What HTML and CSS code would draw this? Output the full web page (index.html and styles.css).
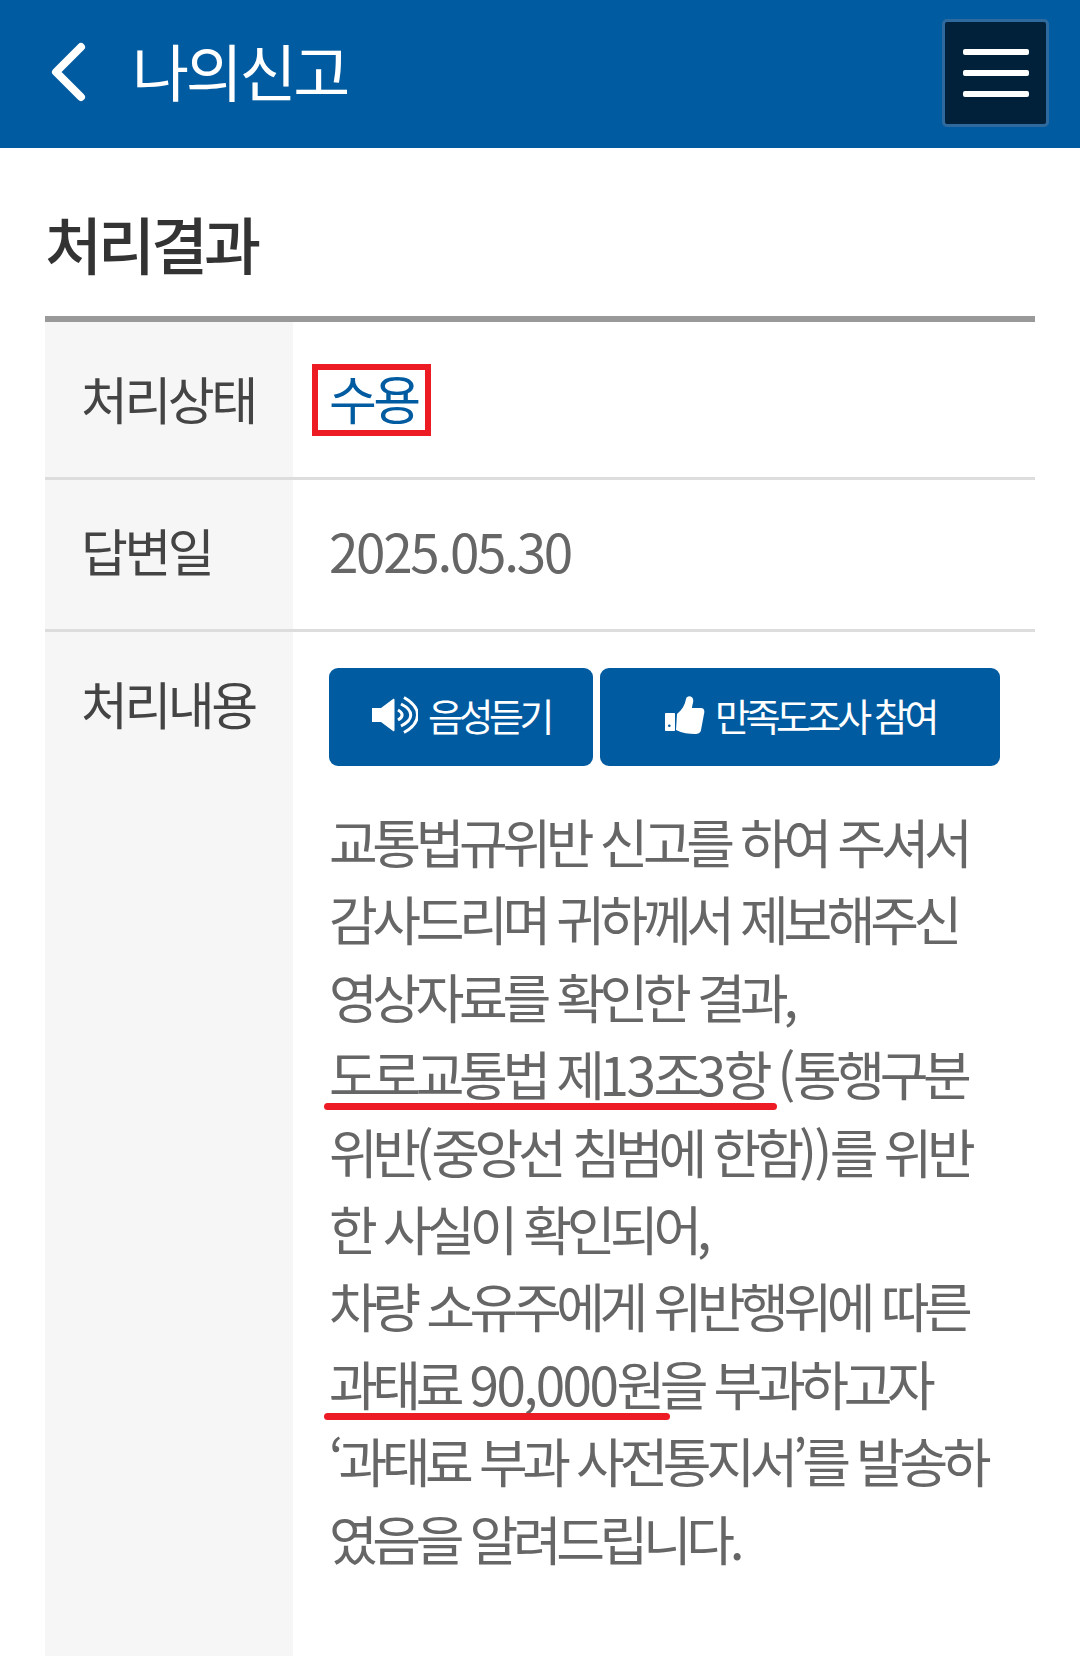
FILE: index.html
```html
<!DOCTYPE html>
<html lang="ko">
<head>
  <meta charset="UTF-8" />
  <meta name="viewport" content="width=device-width, initial-scale=1.0"/>
  <title>나의신고</title>
  <link rel="stylesheet" href="styles.css">
</head>
<body>

  <header class="topbar">
    <svg class="back" viewBox="0 0 40 60" aria-hidden="true">
      <polyline points="33,5 8,30 33,55" />
    </svg>
    <div class="topbar-title">나의신고</div>
    <button class="menu" aria-label="메뉴"><span></span><span></span><span></span></button>
  </header>

  <main class="content">
    <h2>처리결과</h2>

    <div class="result">
      <div class="row row-status">
        <div class="label">처리상태</div>
        <div class="value"><span class="status">수용</span></div>
      </div>

      <div class="row row-date">
        <div class="label">답변일</div>
        <div class="value"><span class="date">2025.05.30</span></div>
      </div>

      <div class="row row-body">
        <div class="label">처리내용</div>
        <div class="value">
          <div class="actions">
            <a class="btn btn-voice">
              <svg class="ico ico-voice" viewBox="0 0 46 38" aria-hidden="true">
                <path class="fill" d="M0 12h9L21 3c.8-.6 1.500-.2 1.500.8v30.400c0 1-.7 1.400-1.500.8L9 26H0z" />
                <path class="line" d="M26 14c5.500 3 5.500 7 0 10M29 8c13 6.500 13 15.500 0 22M32 1.500c18 10 18 25 0 35" />
              </svg>
              음성듣기
            </a>
            <a class="btn btn-survey">
              <svg class="ico ico-survey" viewBox="0 0 40 38" aria-hidden="true">
                <path class="fill" d="M1 17h8c.6 0 1 .4 1 1v16c0 .6-.4 1-1 1H1c-.6 0-1-.4-1-1V18c0-.6.4-1 1-1z" />
                <circle class="hole" cx="4.300" cy="29.700" r="1.300" />
                <path class="fill" d="M12 18C17 14 20 9 21 3c.5-3.500 6-4 7 0 1 3-1 6-1 9h9c3 0 4 3 3 6l-3 16c-.5 3-3 4-6 4-6 0-13-1-19-4z" />
              </svg>
              만족도조사 참여
            </a>
          </div>

          <p class="answer">교통법규위반 신고를 하여 주셔서<br>
          감사드리며 귀하께서 제보해주신<br>
          영상자료를 확인한 결과,<br>
          <span class="mark">도로교통법 제<span class="num">13</span>조<span class="num">3</span>항</span> <span class="num">(</span>통행구분<br>
          위반<span class="num">(</span>중앙선 침범에 한함<span class="num">))</span>를 위반<br>
          한 사실이 확인되어,<br>
          차량 소유주에게 위반행위에 따른<br>
          <span class="mark">과태료 <span class="num">90,000</span>원</span>을 부과하고자<br>
          ‘과태료 부과 사전통지서’를 발송하<br>
          였음을 알려드립니다.</p>
        </div>
      </div>
    </div>
  </main>

</body>
</html>
```

FILE: styles.css
```css
html, body {
  height: 100%;
}

body {
  font-family: "Noto Sans CJK KR", "Noto Sans", sans-serif;
  background-color: #fff;
  color: #666;
  margin: 0;
  overflow: hidden;
  display: flex;
  flex-direction: column;
}

.topbar {
  height: 148px;
  background-color: #005ba1;
  display: flex;
  align-items: center;
  padding: 0 31px 0 48px;
  flex-shrink: 0;
}

.back {
  width: 40px;
  height: 60px;
  fill: none;
  stroke: #fff;
  stroke-width: 8;
  stroke-linecap: round;
  stroke-linejoin: round;
  margin-right: 44px;
  margin-top: -4px;
}

.topbar-title {
  font-size: 62px;
  color: #fff;
  letter-spacing: -3.3px;
  margin-top: -9px;
}

.menu {
  margin-left: auto;
  width: 107px;
  height: 108px;
  background-color: #012039;
  border: 3px solid #2f6a9e;
  border-radius: 5px;
  padding: 27px 17px 0 18px;
  display: flex;
  flex-direction: column;
  gap: 15px;
  box-sizing: border-box;
  margin-top: -2px;
}

.menu span {
  display: block;
  width: 100%;
  height: 6px;
  background-color: #fff;
  border-radius: 2px;
}

.content {
  flex: 1;
  padding: 0 45px;
  display: flex;
  flex-direction: column;
}

h2 {
  font-size: 62px;
  font-weight: 500;
  color: #333;
  letter-spacing: -4px;
  line-height: 84px;
  margin: 53px 0 31px;
}

.result {
  flex: 1;
  display: flex;
  flex-direction: column;
  border-top: 6px solid #999;
}

.row {
  display: flex;
  border-bottom: 3px solid #ddd;
}

.row-body {
  flex: 1;
  border-bottom: none;
}

.label {
  width: 248px;
  flex-shrink: 0;
  box-sizing: border-box;
  background-color: #f6f6f6;
  padding: 0 0 0 36px;
  font-size: 51px;
  color: #444;
  letter-spacing: -3.5px;
  line-height: 72px;
}

.value {
  flex: 1;
  padding: 0 36px;
  font-size: 52px;
  letter-spacing: -3.5px;
  line-height: 72px;
}

.row-status {
  height: 155px;
}

.row-date {
  height: 149px;
}

.row-status .label,
.row-status .value,
.row-date .label,
.row-date .value {
  display: flex;
  align-items: center;
}

.row-status .label {
  padding-bottom: 3px;
}

.row-date .label,
.row-date .value {
  padding-bottom: 10px;
}

.row-body .label {
  padding-top: 35px;
}

.row-status .value {
  padding-left: 19px;
}

.date {
  font-size: 53px;
  letter-spacing: -2.3px;
}

.status {
  color: #005ba1;
  border: 6px solid #ed1c24;
  padding: 0 7px 0 11px;
  height: 72px;
  line-height: 56px;
  box-sizing: border-box;
}

.actions {
  display: flex;
  gap: 7px;
  margin-top: 36px;
}

.btn {
  height: 98px;
  box-sizing: border-box;
  padding-bottom: 5px;
  background-color: #005ba1;
  color: #fff;
  border-radius: 9px;
  display: flex;
  align-items: center;
  justify-content: center;
  font-size: 38px;
  letter-spacing: -4.4px;
  line-height: 1;
}

.btn-voice {
  width: 264px;
}

.btn-survey {
  width: 400px;
}

.ico {
  height: 38px;
  margin-right: 10px;
}

.ico-voice {
  width: 46px;
}

.ico-survey {
  width: 40px;
}

.ico .fill {
  fill: #fff;
}

.ico .line {
  fill: none;
  stroke: #fff;
  stroke-width: 3;
}

.ico .hole {
  fill: #005ba1;
}

.answer {
  margin: 37px 0 0;
  font-size: 53px;
  letter-spacing: -5.4px;
  word-spacing: 1px;
  line-height: 77.4px;
  white-space: nowrap;
}

.num {
  letter-spacing: -2.5px;
}

/* red pen marks drawn over the text */
.mark {
  position: relative;
}

.mark::after {
  content: "";
  position: absolute;
  left: -5px;
  right: -10px;
  bottom: 1px;
  height: 7px;
  background-color: #ed1c24;
  border-radius: 4px;
}
```
